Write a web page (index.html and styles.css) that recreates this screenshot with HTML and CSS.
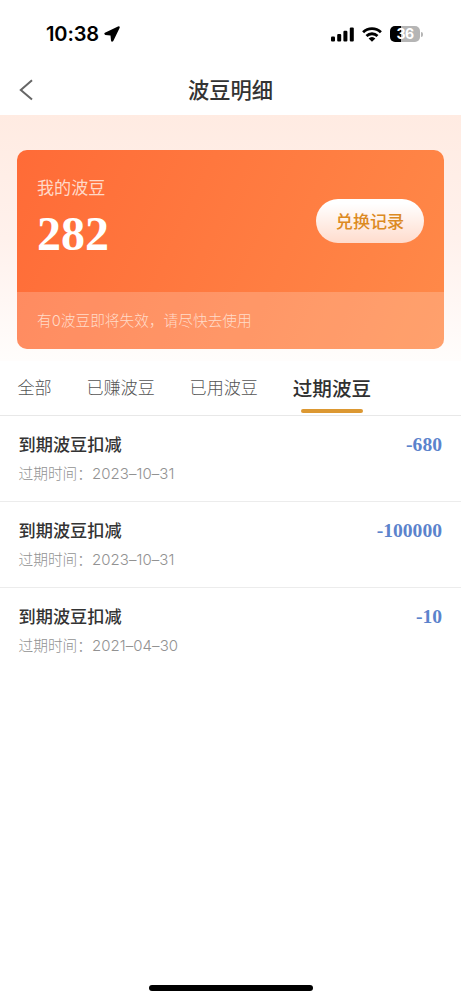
FILE: index.html
```
<!DOCTYPE html>
<html lang="zh-CN">
<head>
<meta charset="UTF-8">
<meta name="viewport" content="width=device-width, initial-scale=1">
<title>波豆明细</title>
<link rel="stylesheet" href="styles.css">
</head>
<body>
<div class="screen">
  <div class="status">
    <div class="status-left">
      <span class="clock">10:38</span>
      <svg class="location" width="16" height="16" viewBox="0 0 16 16"><path d="M14 .4.9 6.8Q-.5 8.1 1.3 8.9L6.5 9.4 7 14.5Q7.6 16.6 9.3 15L15.7 1.8Q16-.2 14 .4Z"/></svg>
    </div>
    <div class="status-right">
      <svg width="23" height="15" viewBox="0 0 23 15"><rect x="0" y="9.6" width="4" height="5" rx="1.1"/><rect x="6.2" y="7" width="4" height="7.6" rx="1.1"/><rect x="12.4" y="3.8" width="4" height="10.8" rx="1.1"/><rect x="18.8" y=".5" width="4" height="14.1" rx="1.1"/></svg>
      <svg class="wifi" width="20" height="15" viewBox="0 0 20 15"><g fill="none" stroke="#000" stroke-width="2.8"><path d="M1.1 5.3a12.8 12.8 0 0 1 17.8 0"/><path d="M4.5 9a7.9 7.9 0 0 1 11 0"/></g><path d="M10 14.8 6.6 11.6a4.6 4.6 0 0 1 6.8 0Z"/></svg>
      <div class="battery"><span class="battery-level">36</span><i class="battery-tip"></i></div>
    </div>
  </div>
  <header class="nav">
    <svg class="back" width="15" height="22" viewBox="0 0 15 22"><path d="M13 1.2 1.8 11 13 20.6"/></svg>
    <h1 class="nav-title">波豆明细</h1>
  </header>
  <section class="hero">
    <div class="card">
      <div class="card-main">
        <div>
          <div class="card-label">我的波豆</div>
          <div class="card-value">282</div>
        </div>
        <button class="exchange">兑换记录</button>
      </div>
      <div class="card-note">有<span class="count">0</span>波豆即将失效，请尽快去使用</div>
    </div>
  </section>
  <nav class="tabs">
    <span class="tab">全部</span>
    <span class="tab">已赚波豆</span>
    <span class="tab">已用波豆</span>
    <span class="tab tab-active">过期波豆</span>
  </nav>
  <main class="list">
    <div class="row">
      <div><div class="row-title">到期波豆扣减</div><div class="row-time">过期时间：<span class="date">2023–10–31</span></div></div>
      <span class="amount">-680</span>
    </div>
    <div class="row">
      <div><div class="row-title">到期波豆扣减</div><div class="row-time">过期时间：<span class="date">2023–10–31</span></div></div>
      <span class="amount">-100000</span>
    </div>
    <div class="row">
      <div><div class="row-title">到期波豆扣减</div><div class="row-time">过期时间：<span class="date">2021–04–30</span></div></div>
      <span class="amount">-10</span>
    </div>
  </main>
  <div class="home"></div>
</div>
</body>
</html>
```
FILE: styles.css
```
* { box-sizing: border-box; }
body {
  margin: 0;
  background: #fff;
  font-family: "Noto Sans CJK SC", sans-serif;
  color: #333;
}
.screen {
  display: flex;
  flex-direction: column;
  width: 461px;
  height: 1000px;
  overflow: hidden;
}
.status {
  display: flex;
  justify-content: space-between;
  height: 64px;
  padding: 24px 41px 0 46px;
}
.status-left, .status-right { display: flex; height: 20px; align-items: center; }
.clock {
  width: 54px;
  font: 600 20px/20px Inter, sans-serif;
  letter-spacing: -0.1px;
  white-space: nowrap;
  color: #000;
}
.location { margin-left: 4px; }
.wifi { margin: 0 8px 0 8px; }
.battery {
  position: relative;
  width: 30px;
  height: 16px;
  border-radius: 5px;
  background: linear-gradient(90deg, #000 36%, #b5b5b5 36%);
}
.battery-level {
  display: block;
  text-align: center;
  font: 700 14px/16.5px Inter, sans-serif;
  letter-spacing: -0.5px;
  color: #fff;
}
.battery-tip {
  position: absolute;
  right: -2.5px;
  top: 6px;
  width: 1.5px;
  height: 5px;
  border-radius: 0 2px 2px 0;
  background: #b5b5b5;
}
.nav {
  display: grid;
  grid-template-columns: 60px 1fr 60px;
  align-items: center;
  height: 51px;
}
.back { margin-left: 19px; fill: none; stroke: #666; stroke-width: 2; }
.nav-title {
  margin: 0;
  padding-bottom: 2px;
  text-align: center;
  font-size: 21.3px;
  font-weight: 500;
  line-height: 30px;
}
.hero {
  height: 246px;
  padding: 35px 17px 0;
  background: linear-gradient(180deg, #ffebe2 0%, #fff1ec 50%, #fffdfc 100%);
}
.card {
  height: 199px;
  border-radius: 10px;
  overflow: hidden;
  background: linear-gradient(115deg, #ff6b37 0%, #ff8a49 100%);
}
.card-main {
  display: flex;
  justify-content: space-between;
  height: 142px;
  padding: 24px 20px 0;
}
.card-label { font-size: 17.1px; line-height: 25px; color: #ffd9c8; }
.card-value {
  margin-top: 8px;
  font: 700 48px/54px "Liberation Serif", serif;
  color: #fff;
}
.exchange {
  width: 108px;
  height: 44px;
  margin-top: 25px;
  padding: 0;
  border: 0;
  border-radius: 22px;
  background: linear-gradient(180deg, #fff 10%, #ffdccd 100%);
  font: 500 17.1px/44px "Noto Sans CJK SC", sans-serif;
  color: #dc8a22;
}
.card-note {
  height: 57px;
  padding-left: 20px;
  background: rgba(255, 255, 255, 0.2);
  font-size: 14.7px;
  font-weight: 300;
  line-height: 56px;
  color: #ffdcca;
}
.count { font-family: Inter, sans-serif; }
.tabs {
  display: flex;
  gap: 34.8px;
  height: 55px;
  padding-left: 17.4px;
  border-bottom: 1px solid #e8e8e8;
}
.tab {
  font-size: 17.1px;
  font-weight: 300;
  line-height: 51px;
  color: #555;
}
.tab-active {
  position: relative;
  font-size: 19.6px;
  font-weight: 500;
  line-height: 54px;
  color: #303030;
}
.tab-active::after {
  content: "";
  position: absolute;
  left: 8px;
  bottom: 2px;
  width: 62px;
  height: 4px;
  border-radius: 2px;
  background: #dc9832;
}
.row {
  display: flex;
  justify-content: space-between;
  height: 86px;
  padding: 15px 19px 0 18.5px;
  border-bottom: 1px solid #ececec;
}
.row:last-child { border-bottom: 0; }
.row-title { font-size: 17.2px; font-weight: 500; line-height: 26px; }
.row-time {
  margin-top: 4px;
  font-size: 14.7px;
  font-weight: 300;
  line-height: 24px;
  color: #929292;
}
.date { font-family: Inter, sans-serif; font-size: 15px; letter-spacing: 0.05px; }
.amount {
  font: 700 19.6px/27px "Liberation Serif", serif;
  color: #5b83cc;
}
.home {
  width: 164px;
  height: 6px;
  margin: auto auto 9px;
  border-radius: 3px;
  background: #000;
}
```
